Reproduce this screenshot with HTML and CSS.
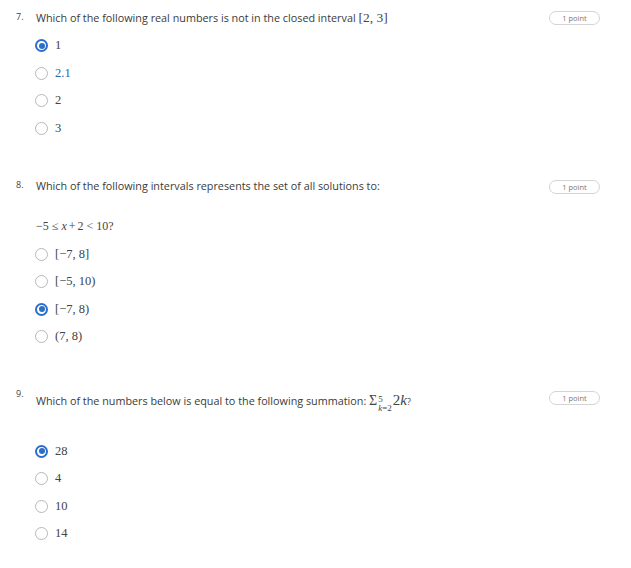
FILE: index.html
```html
<!DOCTYPE html>
<html>
<head>
<meta charset="utf-8">
<link rel="stylesheet" href="styles.css">
</head>
<body>
<div class="quiz">
  <div class="question q7">
    <div class="qnum">7.</div>
    <div class="qbody">
      <div class="qtext">Which of the following real numbers is not in the closed interval <span class="math">[2, 3]</span></div>
      <div class="options">
        <div class="opt"><span class="radio checked"></span><span class="math">1</span></div>
        <div class="opt"><span class="radio"></span><span class="math blue">2.1</span></div>
        <div class="opt"><span class="radio"></span><span class="math">2</span></div>
        <div class="opt"><span class="radio"></span><span class="math">3</span></div>
      </div>
    </div>
    <div class="pill">1 point</div>
  </div>

  <div class="question q8">
    <div class="qnum">8.</div>
    <div class="qbody">
      <div class="qtext">Which of the following intervals represents the set of all solutions to:</div>
      <div class="eq"><span class="math">−5<span class="rel">≤</span><i>x</i><span class="bin">+</span>2<span class="rel">&lt;</span>10?</span></div>
      <div class="options">
        <div class="opt"><span class="radio"></span><span class="math">[−7, 8]</span></div>
        <div class="opt"><span class="radio"></span><span class="math">[−5, 10)</span></div>
        <div class="opt"><span class="radio checked"></span><span class="math">[−7, 8)</span></div>
        <div class="opt"><span class="radio"></span><span class="math">(7, 8)</span></div>
      </div>
    </div>
    <div class="pill">1 point</div>
  </div>

  <div class="question q9">
    <div class="qnum">9.</div>
    <div class="qbody">
      <div class="qtext tall">Which of the numbers below is equal to the following summation: <span class="math sum"><span class="sigma">Σ</span><span class="limits"><span class="sup">5</span><span class="sub"><i>k</i>=2</span></span><span class="big">2<i>k</i></span></span><span class="q">?</span></div>
      <div class="options spaced">
        <div class="opt"><span class="radio checked"></span><span class="math">28</span></div>
        <div class="opt"><span class="radio"></span><span class="math">4</span></div>
        <div class="opt"><span class="radio"></span><span class="math">10</span></div>
        <div class="opt"><span class="radio"></span><span class="math">14</span></div>
      </div>
    </div>
    <div class="pill">1 point</div>
  </div>
</div>
</body>
</html>
```
FILE: styles.css
```css
* { box-sizing: border-box; }
body {
  margin: 0;
  background: #ffffff;
  font-family: "Open Sans", "Noto Sans", sans-serif;
  color: #333333;
}
.quiz {
  padding: 10px 31px 0 16px;
}
.question {
  display: grid;
  grid-template-columns: 19px 1fr auto;
  align-items: start;
}
.q8 { margin-top: 36px; }
.q9 { margin-top: 36px; }
.qnum {
  font-size: 9px;
  line-height: 12px;
  padding-top: 1px;
  color: #444;
}
.qtext {
  font-size: 10.8px;
  line-height: 16px;
  padding-left: 1px;
  color: #3a3a3a;
}
.qtext.tall {
  line-height: 26px;
}
.math {
  font-family: "Liberation Serif", "DejaVu Serif", serif;
  font-size: 12.5px;
  color: #444;
}
.qtext .math { font-size: 13.5px; }
.math i { font-style: italic; }
.rel { margin: 0 3px; }
.bin { margin: 0 2px; }
.blue { color: #2a63b0; }
.options {
  margin-top: 6px;
  display: flex;
  flex-direction: column;
}
.options.spaced { margin-top: 23px; }
.eq {
  margin-top: 19px;
  height: 27.5px;
  display: flex;
  align-items: center;
  padding-left: 1px;
}
.eq .math { font-size: 12px; }
.eq + .options { margin-top: 0; }
.opt {
  height: 27.5px;
  display: flex;
  align-items: center;
  gap: 7px;
}
.radio {
  width: 13px;
  height: 13px;
  border-radius: 50%;
  border: 1px solid #b8b8b8;
  background: #fff;
  display: flex;
  align-items: center;
  justify-content: center;
  flex: none;
}
.radio.checked {
  border: 2px solid #2b6fca;
}
.radio.checked::after {
  content: "";
  width: 6px;
  height: 6px;
  border-radius: 50%;
  background: #2b6fca;
}
.pill {
  margin-top: 1px;
  width: 51px;
  height: 14px;
  border: 1px solid #d4d4d4;
  border-radius: 8px;
  font-size: 7.5px;
  line-height: 12px;
  text-align: center;
  color: #777;
}
.q8 .pill { margin-top: 2px; }
.q9 .pill { margin-top: 4px; }
.sum {
  white-space: nowrap;
}
.sigma {
  font-size: 14px;
}
.limits {
  display: inline-block;
  vertical-align: -6px;
  font-size: 9px;
  line-height: 9px;
  margin-left: 1px;
}
.limits .sup,
.limits .sub {
  display: block;
}
.big {
  font-size: 15px;
  margin-left: 1px;
}
.q {
  font-size: 9px;
  color: #444;
}
```
